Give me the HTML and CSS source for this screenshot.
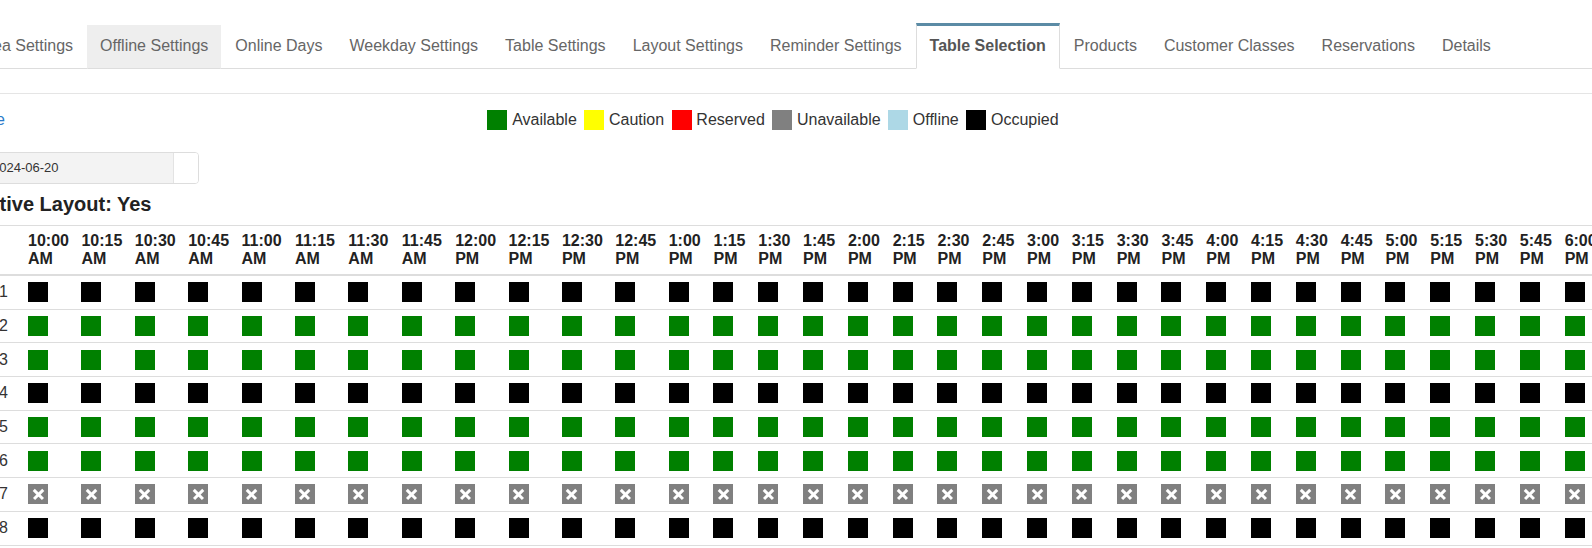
FILE: index.html
```html
<!DOCTYPE html>
<html lang="en">
<head>
<meta charset="utf-8">
<title>Table Selection</title>
<link rel="stylesheet" href="styles.css">
</head>
<body>
<div class="page">
  <ul class="tabs">
    <li><a href="#">Area Settings</a></li>
    <li><a href="#" class="hover">Offline Settings</a></li>
    <li><a href="#">Online Days</a></li>
    <li><a href="#">Weekday Settings</a></li>
    <li><a href="#">Table Settings</a></li>
    <li><a href="#">Layout Settings</a></li>
    <li><a href="#">Reminder Settings</a></li>
    <li><a href="#" class="active">Table Selection</a></li>
    <li><a href="#">Products</a></li>
    <li><a href="#">Customer Classes</a></li>
    <li><a href="#">Reservations</a></li>
    <li><a href="#">Details</a></li>
  </ul>
  <div class="panel">
    <div class="toolbar">
      <a href="#" class="back">Close</a>
      <div class="legend">
        <span class="legend-item"><span class="swatch avail"></span>Available</span>
        <span class="legend-item"><span class="swatch caution"></span>Caution</span>
        <span class="legend-item"><span class="swatch reserved"></span>Reserved</span>
        <span class="legend-item"><span class="swatch unavail"></span>Unavailable</span>
        <span class="legend-item"><span class="swatch offline"></span>Offline</span>
        <span class="legend-item"><span class="swatch occupied"></span>Occupied</span>
      </div>
      <div></div>
    </div>
    <div class="date-group">
      <span class="date-input">2024-06-20</span>
      <span class="date-addon"></span>
    </div>
    <h4 class="layout-title">Active Layout: Yes</h4>
    <table class="slots">
      <thead>
        <tr>
          <th class="lbl"></th>
          <th class="w5">10:00<br>AM</th><th class="w5">10:15<br>AM</th><th class="w5">10:30<br>AM</th><th class="w5">10:45<br>AM</th>
          <th class="w5">11:00<br>AM</th><th class="w5">11:15<br>AM</th><th class="w5">11:30<br>AM</th><th class="w5">11:45<br>AM</th>
          <th class="w5">12:00<br>PM</th><th class="w5">12:15<br>PM</th><th class="w5">12:30<br>PM</th><th class="w5">12:45<br>PM</th>
          <th class="w4">1:00<br>PM</th><th class="w4">1:15<br>PM</th><th class="w4">1:30<br>PM</th><th class="w4">1:45<br>PM</th>
          <th class="w4">2:00<br>PM</th><th class="w4">2:15<br>PM</th><th class="w4">2:30<br>PM</th><th class="w4">2:45<br>PM</th>
          <th class="w4">3:00<br>PM</th><th class="w4">3:15<br>PM</th><th class="w4">3:30<br>PM</th><th class="w4">3:45<br>PM</th>
          <th class="w4">4:00<br>PM</th><th class="w4">4:15<br>PM</th><th class="w4">4:30<br>PM</th><th class="w4">4:45<br>PM</th>
          <th class="w4">5:00<br>PM</th><th class="w4">5:15<br>PM</th><th class="w4">5:30<br>PM</th><th class="w4">5:45<br>PM</th>
          <th class="w4">6:00<br>PM</th><th class="w4">6:15<br>PM</th>
        </tr>
      </thead>
      <tbody>
        <tr>
          <td class="lbl">1</td>
          <td><span class="s k"></span></td><td><span class="s k"></span></td><td><span class="s k"></span></td><td><span class="s k"></span></td><td><span class="s k"></span></td><td><span class="s k"></span></td><td><span class="s k"></span></td><td><span class="s k"></span></td><td><span class="s k"></span></td><td><span class="s k"></span></td>
          <td><span class="s k"></span></td><td><span class="s k"></span></td><td><span class="s k"></span></td><td><span class="s k"></span></td><td><span class="s k"></span></td><td><span class="s k"></span></td><td><span class="s k"></span></td><td><span class="s k"></span></td><td><span class="s k"></span></td><td><span class="s k"></span></td>
          <td><span class="s k"></span></td><td><span class="s k"></span></td><td><span class="s k"></span></td><td><span class="s k"></span></td><td><span class="s k"></span></td><td><span class="s k"></span></td><td><span class="s k"></span></td><td><span class="s k"></span></td><td><span class="s k"></span></td><td><span class="s k"></span></td>
          <td><span class="s k"></span></td><td><span class="s k"></span></td><td><span class="s k"></span></td><td><span class="s k"></span></td>
        </tr>
        <tr>
          <td class="lbl">2</td>
          <td><span class="s g"></span></td><td><span class="s g"></span></td><td><span class="s g"></span></td><td><span class="s g"></span></td><td><span class="s g"></span></td><td><span class="s g"></span></td><td><span class="s g"></span></td><td><span class="s g"></span></td><td><span class="s g"></span></td><td><span class="s g"></span></td>
          <td><span class="s g"></span></td><td><span class="s g"></span></td><td><span class="s g"></span></td><td><span class="s g"></span></td><td><span class="s g"></span></td><td><span class="s g"></span></td><td><span class="s g"></span></td><td><span class="s g"></span></td><td><span class="s g"></span></td><td><span class="s g"></span></td>
          <td><span class="s g"></span></td><td><span class="s g"></span></td><td><span class="s g"></span></td><td><span class="s g"></span></td><td><span class="s g"></span></td><td><span class="s g"></span></td><td><span class="s g"></span></td><td><span class="s g"></span></td><td><span class="s g"></span></td><td><span class="s g"></span></td>
          <td><span class="s g"></span></td><td><span class="s g"></span></td><td><span class="s g"></span></td><td><span class="s g"></span></td>
        </tr>
        <tr>
          <td class="lbl">3</td>
          <td><span class="s g"></span></td><td><span class="s g"></span></td><td><span class="s g"></span></td><td><span class="s g"></span></td><td><span class="s g"></span></td><td><span class="s g"></span></td><td><span class="s g"></span></td><td><span class="s g"></span></td><td><span class="s g"></span></td><td><span class="s g"></span></td>
          <td><span class="s g"></span></td><td><span class="s g"></span></td><td><span class="s g"></span></td><td><span class="s g"></span></td><td><span class="s g"></span></td><td><span class="s g"></span></td><td><span class="s g"></span></td><td><span class="s g"></span></td><td><span class="s g"></span></td><td><span class="s g"></span></td>
          <td><span class="s g"></span></td><td><span class="s g"></span></td><td><span class="s g"></span></td><td><span class="s g"></span></td><td><span class="s g"></span></td><td><span class="s g"></span></td><td><span class="s g"></span></td><td><span class="s g"></span></td><td><span class="s g"></span></td><td><span class="s g"></span></td>
          <td><span class="s g"></span></td><td><span class="s g"></span></td><td><span class="s g"></span></td><td><span class="s g"></span></td>
        </tr>
        <tr>
          <td class="lbl">4</td>
          <td><span class="s k"></span></td><td><span class="s k"></span></td><td><span class="s k"></span></td><td><span class="s k"></span></td><td><span class="s k"></span></td><td><span class="s k"></span></td><td><span class="s k"></span></td><td><span class="s k"></span></td><td><span class="s k"></span></td><td><span class="s k"></span></td>
          <td><span class="s k"></span></td><td><span class="s k"></span></td><td><span class="s k"></span></td><td><span class="s k"></span></td><td><span class="s k"></span></td><td><span class="s k"></span></td><td><span class="s k"></span></td><td><span class="s k"></span></td><td><span class="s k"></span></td><td><span class="s k"></span></td>
          <td><span class="s k"></span></td><td><span class="s k"></span></td><td><span class="s k"></span></td><td><span class="s k"></span></td><td><span class="s k"></span></td><td><span class="s k"></span></td><td><span class="s k"></span></td><td><span class="s k"></span></td><td><span class="s k"></span></td><td><span class="s k"></span></td>
          <td><span class="s k"></span></td><td><span class="s k"></span></td><td><span class="s k"></span></td><td><span class="s k"></span></td>
        </tr>
        <tr>
          <td class="lbl">5</td>
          <td><span class="s g"></span></td><td><span class="s g"></span></td><td><span class="s g"></span></td><td><span class="s g"></span></td><td><span class="s g"></span></td><td><span class="s g"></span></td><td><span class="s g"></span></td><td><span class="s g"></span></td><td><span class="s g"></span></td><td><span class="s g"></span></td>
          <td><span class="s g"></span></td><td><span class="s g"></span></td><td><span class="s g"></span></td><td><span class="s g"></span></td><td><span class="s g"></span></td><td><span class="s g"></span></td><td><span class="s g"></span></td><td><span class="s g"></span></td><td><span class="s g"></span></td><td><span class="s g"></span></td>
          <td><span class="s g"></span></td><td><span class="s g"></span></td><td><span class="s g"></span></td><td><span class="s g"></span></td><td><span class="s g"></span></td><td><span class="s g"></span></td><td><span class="s g"></span></td><td><span class="s g"></span></td><td><span class="s g"></span></td><td><span class="s g"></span></td>
          <td><span class="s g"></span></td><td><span class="s g"></span></td><td><span class="s g"></span></td><td><span class="s g"></span></td>
        </tr>
        <tr>
          <td class="lbl">6</td>
          <td><span class="s g"></span></td><td><span class="s g"></span></td><td><span class="s g"></span></td><td><span class="s g"></span></td><td><span class="s g"></span></td><td><span class="s g"></span></td><td><span class="s g"></span></td><td><span class="s g"></span></td><td><span class="s g"></span></td><td><span class="s g"></span></td>
          <td><span class="s g"></span></td><td><span class="s g"></span></td><td><span class="s g"></span></td><td><span class="s g"></span></td><td><span class="s g"></span></td><td><span class="s g"></span></td><td><span class="s g"></span></td><td><span class="s g"></span></td><td><span class="s g"></span></td><td><span class="s g"></span></td>
          <td><span class="s g"></span></td><td><span class="s g"></span></td><td><span class="s g"></span></td><td><span class="s g"></span></td><td><span class="s g"></span></td><td><span class="s g"></span></td><td><span class="s g"></span></td><td><span class="s g"></span></td><td><span class="s g"></span></td><td><span class="s g"></span></td>
          <td><span class="s g"></span></td><td><span class="s g"></span></td><td><span class="s g"></span></td><td><span class="s g"></span></td>
        </tr>
        <tr>
          <td class="lbl">7</td>
          <td><span class="s u"></span></td><td><span class="s u"></span></td><td><span class="s u"></span></td><td><span class="s u"></span></td><td><span class="s u"></span></td><td><span class="s u"></span></td><td><span class="s u"></span></td><td><span class="s u"></span></td><td><span class="s u"></span></td><td><span class="s u"></span></td>
          <td><span class="s u"></span></td><td><span class="s u"></span></td><td><span class="s u"></span></td><td><span class="s u"></span></td><td><span class="s u"></span></td><td><span class="s u"></span></td><td><span class="s u"></span></td><td><span class="s u"></span></td><td><span class="s u"></span></td><td><span class="s u"></span></td>
          <td><span class="s u"></span></td><td><span class="s u"></span></td><td><span class="s u"></span></td><td><span class="s u"></span></td><td><span class="s u"></span></td><td><span class="s u"></span></td><td><span class="s u"></span></td><td><span class="s u"></span></td><td><span class="s u"></span></td><td><span class="s u"></span></td>
          <td><span class="s u"></span></td><td><span class="s u"></span></td><td><span class="s u"></span></td><td><span class="s u"></span></td>
        </tr>
        <tr>
          <td class="lbl">8</td>
          <td><span class="s k"></span></td><td><span class="s k"></span></td><td><span class="s k"></span></td><td><span class="s k"></span></td><td><span class="s k"></span></td><td><span class="s k"></span></td><td><span class="s k"></span></td><td><span class="s k"></span></td><td><span class="s k"></span></td><td><span class="s k"></span></td>
          <td><span class="s k"></span></td><td><span class="s k"></span></td><td><span class="s k"></span></td><td><span class="s k"></span></td><td><span class="s k"></span></td><td><span class="s k"></span></td><td><span class="s k"></span></td><td><span class="s k"></span></td><td><span class="s k"></span></td><td><span class="s k"></span></td>
          <td><span class="s k"></span></td><td><span class="s k"></span></td><td><span class="s k"></span></td><td><span class="s k"></span></td><td><span class="s k"></span></td><td><span class="s k"></span></td><td><span class="s k"></span></td><td><span class="s k"></span></td><td><span class="s k"></span></td><td><span class="s k"></span></td>
          <td><span class="s k"></span></td><td><span class="s k"></span></td><td><span class="s k"></span></td><td><span class="s k"></span></td>
        </tr>
      </tbody>
    </table>
  </div>
</div>
</body>
</html>
```

FILE: styles.css
```css
html, body {
  margin: 0;
  padding: 0;
  overflow: hidden;
  background: #fff;
}
body {
  font-family: "Liberation Sans", Arial, sans-serif;
  font-size: 16px;
  color: #333;
}
.page {
  margin-left: -36px;
}

/* tabs */
.tabs {
  display: flex;
  align-items: flex-end;
  list-style: none;
  margin: 23px 0 0;
  padding: 0;
  border-bottom: 1px solid #ddd;
}
.tabs a {
  display: block;
  padding: 10px 12px 12px;
  margin: 0 1px -1px 0;
  border: 1px solid transparent;
  line-height: 20px;
  color: #666;
  text-decoration: none;
  white-space: nowrap;
}
.tabs a.hover {
  background: #eee;
  border-color: #eee #eee #ddd;
}
.tabs a.active {
  padding-left: 13px;
  padding-right: 13px;
  background: #fff;
  border-color: #ddd;
  border-top: 3px solid #5b8ba5;
  border-bottom-color: transparent;
  color: #555;
  font-weight: bold;
}

/* panel */
.panel {
  margin-top: 24px;
  border-top: 1px solid #e5e5e5;
}
.toolbar {
  display: grid;
  grid-template-columns: 1fr auto 1fr;
  align-items: center;
  margin-top: 16px;
  padding-right: 10px;
}
.back {
  justify-self: start;
  color: #2a7ac9;
  text-decoration: none;
  line-height: 20px;
}
.legend {
  display: flex;
  align-items: center;
  gap: 7.5px;
}
.legend-item {
  display: flex;
  align-items: center;
  gap: 4.7px;
  line-height: 20px;
  color: #333;
}
.swatch {
  display: block;
  width: 20px;
  height: 20px;
}
.avail { background: #008000; }
.caution { background: #ffff00; }
.reserved { background: #ff0000; }
.unavail { background: #808080; }
.offline { background: #add8e6; }
.occupied { background: #000; }

/* date */
.date-group {
  display: flex;
  box-sizing: border-box;
  width: 235px;
  height: 32px;
  margin-top: 22px;
  border: 1px solid #ddd;
  border-radius: 4px;
  overflow: hidden;
}
.date-input {
  flex: 1;
  background: #f3f3f3;
  padding-left: 27px;
  font-size: 13px;
  line-height: 30px;
  color: #333;
}
.date-addon {
  width: 24px;
  background: #fff;
  border-left: 1px solid #e3e3e3;
}

.layout-title {
  margin: 8px 0 0;
  padding-left: 10px;
  font-size: 20px;
  line-height: 24px;
  font-weight: bold;
  color: #222;
}

/* slots table */
.slots {
  width: max-content;
  border-collapse: collapse;
  margin-top: 9px;
  border-top: 1px solid #ddd;
  border-bottom: 1px solid #ddd;
}
.slots th {
  font-size: 16px;
  line-height: 17.67px;
  font-weight: bold;
  color: #222;
  text-align: left;
  vertical-align: bottom;
  padding: 6.33px 6px;
  border-bottom: 2px solid #ddd;
  white-space: nowrap;
}
.slots th.w5 { width: 41.4px; min-width: 41.4px; }
.slots th.w4 { width: 32.8px; min-width: 32.8px; }
.slots .lbl {
  width: 44px;
  min-width: 44px;
  padding: 0 14px 0 0;
  text-align: right;
}
.slots td {
  padding: 6.35px 6px;
  border-top: 1px solid #ddd;
  vertical-align: middle;
}
.slots td.lbl {
  padding: 0 14px 0 0;
  line-height: 20px;
  color: #333;
}
.s {
  display: block;
  width: 20px;
  height: 20px;
}
.s.k { background: #000; }
.s.g { background: #008000; }
.s.u {
  position: relative;
  background: #808080;
}
.s.u::before,
.s.u::after {
  content: "";
  position: absolute;
  left: 3.5px;
  top: 8.7px;
  width: 13px;
  height: 2.6px;
  background: #fff;
  transform: rotate(45deg);
}
.s.u::after {
  transform: rotate(-45deg);
}
```
